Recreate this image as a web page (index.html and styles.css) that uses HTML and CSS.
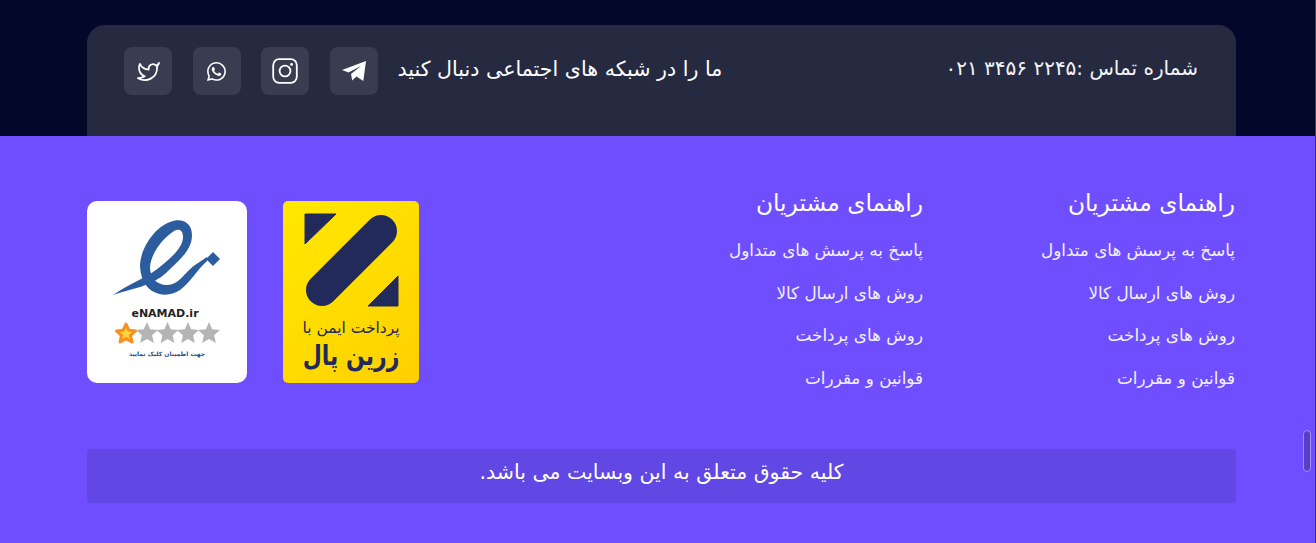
FILE: index.html
```html
<!DOCTYPE html>
<html lang="fa" dir="rtl">

<head>
    <meta charset="UTF-8">
    <meta name="viewport" content="width=device-width, initial-scale=1.0">
    <title>فوتر</title>
    <link rel="stylesheet" href="styles.css">
</head>

<body>
    <div class="page">
        <section class="top">
            <div class="contact-panel">
                <p class="phone">شماره تماس :۲۲۴۵ ۳۴۵۶ ۰۲۱</p>
                <div class="social">
                    <p class="social-title">ما را در شبکه های اجتماعی دنبال کنید</p>
                    <ul class="social-list">
                        <li class="social-item">
                            <svg width="26" height="22" viewBox="0 0 26 22">
                                <path class="icon-fill" d="M1 10 25 1 22.3 21 15.5 16.5 11.2 20.5 10 14 20 6 7.500 12.500Z" />
                            </svg>
                        </li>
                        <li class="social-item">
                            <svg width="26" height="26" viewBox="0 0 26 26">
                                <rect class="icon-line" x="1.2" y="1.2" width="23.6" height="23.6" rx="6" />
                                <circle class="icon-line" cx="13" cy="13" r="5.4" />
                                <circle class="icon-fill" cx="19.6" cy="6.4" r="1.4" />
                            </svg>
                        </li>
                        <li class="social-item">
                            <svg width="19" height="19" viewBox="0 0 16 16">
                                <path class="icon-fill" d="M13.601 2.326A7.854 7.854 0 0 0 7.994 0C3.627 0 .068 3.558.064 7.926c0 1.399.366 2.76 1.057 3.965L0 16l4.204-1.102a7.933 7.933 0 0 0 3.79.965h.004c4.368 0 7.926-3.558 7.93-7.93A7.898 7.898 0 0 0 13.6 2.326zM7.994 14.521a6.573 6.573 0 0 1-3.356-.92l-.24-.144-2.494.654.666-2.433-.156-.251a6.56 6.56 0 0 1-1.007-3.505c0-3.626 2.957-6.584 6.591-6.584a6.56 6.56 0 0 1 4.66 1.931 6.557 6.557 0 0 1 1.928 4.66c-.004 3.639-2.961 6.592-6.592 6.592zm3.615-4.934c-.197-.099-1.17-.578-1.353-.646-.182-.065-.315-.099-.445.099-.133.197-.513.646-.627.775-.114.133-.232.148-.43.05-.197-.1-.836-.308-1.592-.985-.59-.525-.985-1.175-1.103-1.372-.114-.198-.011-.304.088-.403.087-.088.197-.232.296-.346.1-.114.133-.198.198-.33.065-.134.034-.248-.015-.347-.05-.099-.445-1.076-.612-1.47-.16-.389-.323-.335-.445-.34-.114-.007-.247-.007-.38-.007a.729.729 0 0 0-.529.247c-.182.198-.691.677-.691 1.654 0 .977.71 1.916.81 2.049.098.133 1.394 2.132 3.383 2.992.47.205.84.326 1.129.418.475.152.904.129 1.246.08.38-.058 1.171-.48 1.338-.943.164-.464.164-.86.114-.943-.049-.084-.182-.133-.38-.232z" />
                            </svg>
                        </li>
                        <li class="social-item">
                            <svg width="23" height="23" viewBox="0 0 24 24">
                                <path class="icon-line" d="M23 3a10.9 10.9 0 0 1-3 3 4.48 4.48 0 0 0-7.86 3v1A10.66 10.66 0 0 1 3 4s-4 9 5 13a11.64 11.64 0 0 1-7 2c9 5 20 0 20-11.5a4.5 4.5 0 0 0-.08-.83A7.72 7.72 0 0 0 23 3z" />
                            </svg>
                        </li>
                    </ul>
                </div>
            </div>
        </section>

        <footer class="footer">
            <div class="footer-main">
                <div class="link-col">
                    <h3 class="link-title">راهنمای مشتریان</h3>
                    <a class="link" href="#">پاسخ به پرسش های متداول</a>
                    <a class="link" href="#">روش های ارسال کالا</a>
                    <a class="link" href="#">روش های پرداخت</a>
                    <a class="link" href="#">قوانین و مقررات</a>
                </div>
                <div class="link-col">
                    <h3 class="link-title">راهنمای مشتریان</h3>
                    <a class="link" href="#">پاسخ به پرسش های متداول</a>
                    <a class="link" href="#">روش های ارسال کالا</a>
                    <a class="link" href="#">روش های پرداخت</a>
                    <a class="link" href="#">قوانین و مقررات</a>
                </div>
                <div class="badges">
                    <div class="badge badge-zarin">
                        <svg width="136" height="182" viewBox="0 0 136 182">
                            <path class="zarin-shape" d="M22 13H53L22 43Z" />
                            <path class="zarin-bar" d="M98 30 39 89" />
                            <path class="zarin-shape" d="M115 75V105H85Z" />
                            <text class="zarin-small" x="68" y="132">پرداخت ایمن با</text>
                            <text class="zarin-big" transform="translate(68 164) scale(1 1.25)">زرین پال</text>
                        </svg>
                    </div>
                    <div class="badge badge-enamad">
                        <svg width="160" height="182" viewBox="0 0 160 182">
                            <path class="enamad-mark" d="M26 94C45 81 62 76 74 65 86 55 96 46 96 36 96 29 92 27 87 30 76 37 64 52 63 66 63 77 70 84 80 84 92 84 97 72 108 64L120 56 120 60C110 69 103 82 93 89 84 95 74 95 65 90 57 85 53 74 53 64 54 47 67 27 83 21 95 16 105 22 105 34 105 50 91 60 79 72 65 85 44 88 26 94Z" />
                            <path class="enamad-mark" d="M119 58 126 51 133 58 126 65Z" />
                            <text class="enamad-name" x="78" y="116">eNAMAD.ir</text>
                            <path class="star star-on" d="M39 123l2.800 6.200 6.800.7-5.100 4.500 1.500 6.600-6-3.400-6 3.400 1.500-6.600-5.100-4.500 6.800-.7z" />
                            <path class="star" d="M60 121l3.200 7.200 7.800.8-5.900 5.200 1.700 7.700-6.800-4-6.800 4 1.700-7.700-5.900-5.200 7.800-.8z" />
                            <path class="star" d="M80.500 121l3.200 7.200 7.800.8-5.900 5.200 1.700 7.700-6.800-4-6.800 4 1.700-7.700-5.900-5.200 7.800-.8z" />
                            <path class="star" d="M101 121l3.200 7.200 7.800.8-5.900 5.200 1.700 7.700-6.800-4-6.800 4 1.700-7.700-5.900-5.200 7.800-.8z" />
                            <path class="star" d="M122 121l3.200 7.200 7.800.8-5.900 5.200 1.700 7.700-6.800-4-6.800 4 1.700-7.700-5.900-5.200 7.800-.8z" />
                            <text class="enamad-note" x="80" y="155">جهت اطمینان کلیک نمایید</text>
                        </svg>
                    </div>
                </div>
            </div>
            <p class="copyright">کلیه حقوق متعلق به این وبسایت می باشد.</p>
        </footer>
    </div>
    <div class="scroll-thumb"></div>
</body>

</html>
```

FILE: styles.css
```css
* {
    margin: 0;
    padding: 0;
    box-sizing: border-box;
}

html,
body {
    height: 543px;
    overflow: hidden;
}

body {
    font-family: "DejaVu Sans", "Noto Sans", sans-serif;
    color: #fff;
    background-color: #03082a;
}

.page {
    height: 543px;
    border-right: 1px solid #3c3c4c;
}

.top {
    padding: 25px 79px 0 87px;
}

.contact-panel {
    display: flex;
    justify-content: space-between;
    align-items: flex-start;
    height: 111px;
    padding: 22px 38px 0 37px;
    background-color: #262a41;
    border-radius: 18px 18px 0 0;
}

.phone {
    font-size: 20px;
    line-height: 42px;
    color: #f4f4f8;
}

.social {
    display: flex;
    align-items: center;
    gap: 20px;
}

.social-title {
    font-size: 20.6px;
    line-height: 44px;
    margin-bottom: 4px;
}

.social-list {
    display: flex;
    gap: 20.5px;
    list-style: none;
}

.social-item {
    display: flex;
    align-items: center;
    justify-content: center;
    width: 48px;
    height: 48px;
    background-color: #3a3d52;
    border-radius: 8px;
}

.icon-fill {
    fill: #fff;
}

.icon-line {
    fill: none;
    stroke: #fff;
    stroke-width: 1.8;
    stroke-linejoin: round;
}

.footer {
    height: 407px;
    padding: 54px 79px 0 87px;
    background-color: #6f4eff;
}

.footer-main {
    display: flex;
    height: 193px;
}

.link-col {
    display: flex;
    flex-direction: column;
    width: 312px;
    padding-right: 1px;
}

.link-title {
    margin-bottom: 13px;
    font-size: 23.3px;
    font-weight: 400;
    line-height: 26px;
}

.link {
    font-size: 16.8px;
    line-height: 42.5px;
    color: #f2f0ff;
    text-decoration: none;
}

.badges {
    display: flex;
    gap: 36px;
    margin-top: 11px;
    margin-right: auto;
}

.badge {
    height: 182px;
    overflow: hidden;
}

.badge svg {
    display: block;
}

.badge-zarin {
    width: 136px;
    background: linear-gradient(135deg, #ffe900, #ffcf00);
    border-radius: 5px;
}

.badge-enamad {
    width: 160px;
    background-color: #fff;
    border-radius: 10px;
}

.zarin-shape {
    fill: #212a5a;
    stroke: #212a5a;
    stroke-width: 1;
    stroke-linejoin: round;
}

.zarin-bar {
    fill: none;
    stroke: #212a5a;
    stroke-width: 32;
    stroke-linecap: round;
}

.zarin-small,
.zarin-big {
    fill: #212a5a;
    text-anchor: middle;
    direction: rtl;
}

.zarin-small {
    font-size: 15.5px;
}

.zarin-big {
    font-size: 22px;
    font-weight: 700;
}

.enamad-mark {
    fill: #2b5c9e;
}

.enamad-name {
    fill: #222;
    font-size: 11px;
    font-weight: 700;
    text-anchor: middle;
    direction: ltr;
}

.star {
    fill: #b4b4b4;
}

.star-on {
    fill: #ffd43a;
    stroke: #f7901e;
    stroke-width: 3;
    stroke-linejoin: round;
}

.enamad-note {
    fill: #2b4a8c;
    font-size: 6px;
    font-weight: 700;
    text-anchor: middle;
    direction: rtl;
}

.copyright {
    height: 54px;
    margin-top: 66px;
    font-size: 20.5px;
    line-height: 47px;
    text-align: center;
    background-color: #6147e3;
    border-radius: 4px;
}

.scroll-thumb {
    position: fixed;
    top: 430px;
    left: 1303px;
    width: 8px;
    height: 42px;
    background-color: #5a3fc4;
    border: 1px solid #9e8cff;
    border-radius: 4px;
}
```
